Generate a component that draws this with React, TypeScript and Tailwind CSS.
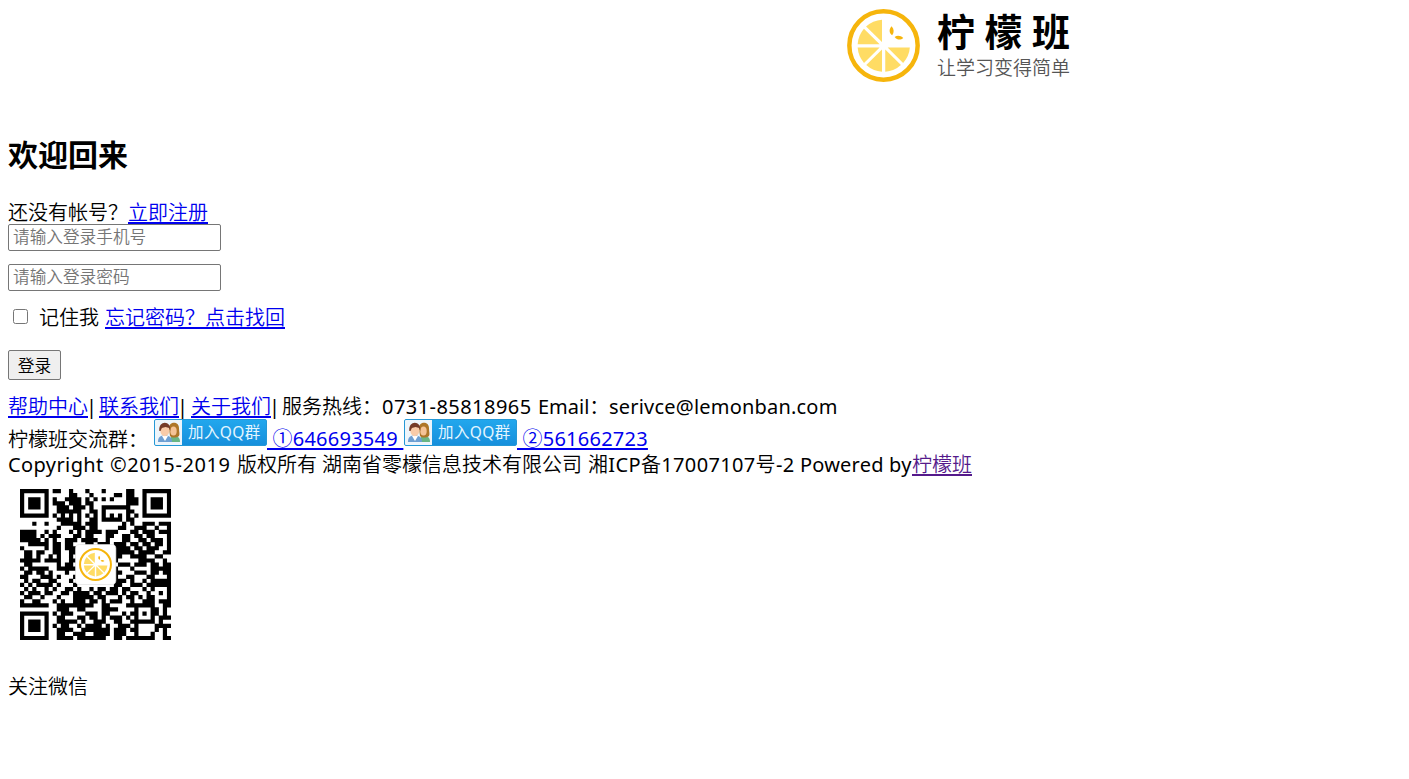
import React from 'react';

const QR_ROWS = [
  '1111111011001000100010000011001111111',
  '1000001000001100010000011011001000001',
  '1011101010011110101010100011101011101',
  '1011101011101110110000000011101011101',
  '1011101001110111010011111110001011101',
  '1000001001111110011010000011001000001',
  '1111111010101010101010101010101111111',
  '0000000001111010011011111011000000000',
  '0001001000111110111000000101001110111',
  '0000000001000111011000001100111001001',
  '1111001010001010111101110001101110111',
  '1111010111000110110001100110110110001',
  '1111101010011101111001000110011011101',
  '0011111011011000110111011101101101101',
  '1000001011011100000000011110110111001',
  '0110110011001100000000011111011110011',
  '0110100101001000000000011001111001100',
  '1111101111001100000000010000011110010',
  '0110000001011000000000001110111011011',
  '1011111001111100000000010001000011111',
  '0110110100010000000000011000111011011',
  '1100011101000100000000010011000110001',
  '0101100110001000000000011101001011111',
  '1010111101000100000000011001110111111',
  '0101001010011010010110110110001010001',
  '1011101100110111101101110101100100101',
  '0110010001000111110110001011010110001',
  '1001100010100111011010111001001110111',
  '1111111001111111110011000011111110011',
  '0000000001110011000011110000100011010',
  '1111111010111000111011000101101011010',
  '1000001001100011011010111010100010111',
  '1011101001111101001110011001111110100',
  '1011101010110010111101001110100001111',
  '1011101001111001111111011101100001010',
  '1000001001100111001111011100100010010',
  '1111111001111011111110011011111110011',
];

const qrPath = QR_ROWS.map((row, y) =>
  row.split('').map((cell, x) => (cell === '1' ? `M${x} ${y}h1.03v1.03h-1.03z` : '')).join(''),
).join('');

function Lemon({ className }: { className: string }) {
  return (
    <svg viewBox="0 0 72 72" className={className} aria-hidden="true">
      <circle cx="36" cy="36" r="33.7" fill="#fff" stroke="#f6b50c" strokeWidth="4.4" />
      <g fill="#ffdc64">
        <path d="M34.5 10.5v22L18.8 17.2A26 26 0 0 1 34.5 10.5Z" />
        <path d="M16.7 19.4 32.2 34.7H10.5A26 26 0 0 1 16.7 19.4Z" />
        <path d="M10.5 38h21.7L16.8 53.2A26 26 0 0 1 10.5 38Z" />
        <path d="M34.5 40v22A26 26 0 0 1 19 55.3Z" />
        <path d="M37.7 40 53.2 55.3A26 26 0 0 1 37.7 62Z" />
        <path d="M40.1 38H62A26 26 0 0 1 55.4 53.2Z" />
      </g>
      <g fill="#f6b50c">
        <path d="M44 17c-3 3-2.4 7 .6 9 2-3 2-6-.6-9Z" />
        <path d="M47 27.5c2.5-2 6-1.5 8.5 1-2.8 2.5-6 2-8.5-1Z" />
      </g>
    </svg>
  );
}

function QqBadge() {
  return (
    <span className="flex h-[27px] w-[113px] shrink-0 overflow-hidden rounded-[2px] border border-[#2498d6] bg-linear-to-b from-[#22a7ed] to-[#168fdc]">
      <svg viewBox="0 0 27 25" className="h-[25px] w-[27px] shrink-0" aria-hidden="true">
        <path d="M0 0h27v25H0z" fill="#edf5fb" />
        <path d="M15 22c0-5 1-6 4-7 4 1 6 3 6 7Z" fill="#69b583" />
        <path d="M14 8c0-7 10-7 10 0 0 4 1 6 0 8-3 2-7 2-9 0Z" fill="#ad7628" />
        <ellipse cx="18.5" cy="11" rx="3.2" ry="4.5" fill="#f4c396" />
        <path d="M3 22c0-5 2-6 7-7 5 1 7 3 7 7Z" fill="#6d9fd2" />
        <path d="m7 16 3 5 3-5Z" fill="#fff" />
        <ellipse cx="9.8" cy="10.5" rx="4.5" ry="5.7" fill="#f8cba8" />
        <path d="M4.3 11C3 0 16.7 0 15.3 11l-1.2-3-3.5-1-3.7 1-1.4 3Z" fill="#743b28" />
      </svg>
      <span className="h-[25px] w-[80px] pl-[6px] font-['Noto_Sans','Noto_Sans_CJK_SC',sans-serif] text-[15.5px] leading-[25px] tracking-[0.4px] text-[#e5f6ff]">加入QQ群</span>
    </span>
  );
}

const link = 'shrink-0 text-[#0000ee] underline decoration-[1.5px] underline-offset-[2px]';
const field = 'block h-[27px] w-[213px] rounded-[2px] border border-[#767676] bg-white px-[4px] pb-[2px] text-[16.67px] leading-[22px] text-black outline-none placeholder:text-[#757575]';

export default function App() {
  return (
    <main className="h-[779px] overflow-hidden bg-white pl-[8px] pt-[9px] font-['Noto_Sans','Noto_Sans_CJK_SC_DemiLight','Noto_Sans_CJK_SC_Light','Noto_Sans_CJK_SC',sans-serif] text-[20px] leading-[27px] text-black">
      <header className="ml-[839px] flex h-[125px] items-start">
        <Lemon className="h-[73px] w-[73px]" />
        <div className="ml-[17px] w-[140px] whitespace-nowrap">
          <div className="h-[47px] font-['Noto_Sans_CJK_SC',sans-serif] text-[38px] leading-[41px] font-bold tracking-[9.5px]">柠檬班</div>
          <div className="text-[19px] leading-[24px] text-[#555]">让学习变得简单</div>
        </div>
      </header>
      <h2 className="h-[65px] font-['Noto_Sans_CJK_SC',sans-serif] text-[30px] leading-[38px] font-bold">欢迎回来</h2>
      <form onSubmit={(e) => e.preventDefault()}>
        <div className="flex h-[25px] whitespace-pre">
          <span className="w-[120px]">还没有帐号？</span>
          <a href="#" className={link}>立即注册</a>
        </div>
        <input className={field} type="tel" placeholder="请输入登录手机号" />
        <input className={`${field} mt-[13px]`} type="password" placeholder="请输入登录密码" />
        <div className="mt-[13px] flex h-[46px] whitespace-pre">
          <input type="checkbox" className="mt-[5px] mr-[11px] ml-[5px] h-[15px] w-[15px] appearance-none rounded-[2.5px] border border-[#767676] bg-white checked:bg-[#0075ff]" />
          <span className="w-[66px]">记住我</span>
          <a href="#" className={link}>忘记密码？点击找回</a>
        </div>
        <button className="block h-[30px] w-[53px] rounded-[2px] border border-[#767676] bg-[#efefef] pt-px text-[16.67px] leading-[27px]">登录</button>
      </form>
      <footer className="pt-[13px] whitespace-pre">
        <div className="flex h-[26px]">
          <a href="#" className={link}>帮助中心</a><span className="-ml-[2px] w-[13px]">|</span>
          <a href="#" className={link}>联系我们</a><span className="-ml-[2px] w-[14px]">|</span>
          <a href="#" className={link}>关于我们</a><span className="-ml-[2px] w-[13px]">|</span>
          <span className="w-[100px]">服务热线：</span>
          <span className="w-[156px] tracking-[0.45px]">0731-85818965</span>
          <span className="w-[71px]">Email：</span>
          <span className="tracking-[0.2px]">serivce@lemonban.com</span>
        </div>
        <div className="flex h-[32px]">
          <span className="w-[146px] pt-[7px]">柠檬班交流群：</span>
          <QqBadge />
          <a href="#" className={`${link} w-[137px] pt-[6px] tracking-[0.25px]`}> ①646693549 </a>
          <QqBadge />
          <a href="#" className={`${link} pt-[6px] tracking-[0.25px]`}> ②561662723</a>
        </div>
        <div className="flex h-[28px]">
          <span className="w-[102px] shrink-0 tracking-[0.4px]">Copyright</span>
          <span className="w-[127px] shrink-0 tracking-[0.6px]">©2015-2019</span>
          <span className="w-[85px] shrink-0">版权所有</span>
          <span className="w-[266px] shrink-0">湖南省零檬信息技术有限公司</span>
          <span className="w-[212px] shrink-0 tracking-[0.35px]">湘ICP备17007107号-2</span>
          <span className="w-[112px] shrink-0 tracking-[0.2px]">Powered by</span>
          <a href="#" className="text-[#551a8b] underline decoration-[1.5px] underline-offset-[2px]">柠檬班</a>
        </div>
        <div className="grid h-[194px] w-[175px] pt-[10px] pl-[12px]">
          <svg viewBox="0 0 37 37" className="col-start-1 row-start-1 h-[151px] w-[151px]" aria-label="微信二维码">
            <path d={qrPath} fill="#000" />
            <rect x="13.6" y="13.6" width="9.9" height="9.8" rx="1" fill="#fff" stroke="#ddd" strokeWidth=".15" />
          </svg>
          <Lemon className="col-start-1 row-start-1 mt-[59px] ml-[59px] h-[33px] w-[33px]" />
        </div>
        <p>关注微信</p>
      </footer>
    </main>
  );
}
